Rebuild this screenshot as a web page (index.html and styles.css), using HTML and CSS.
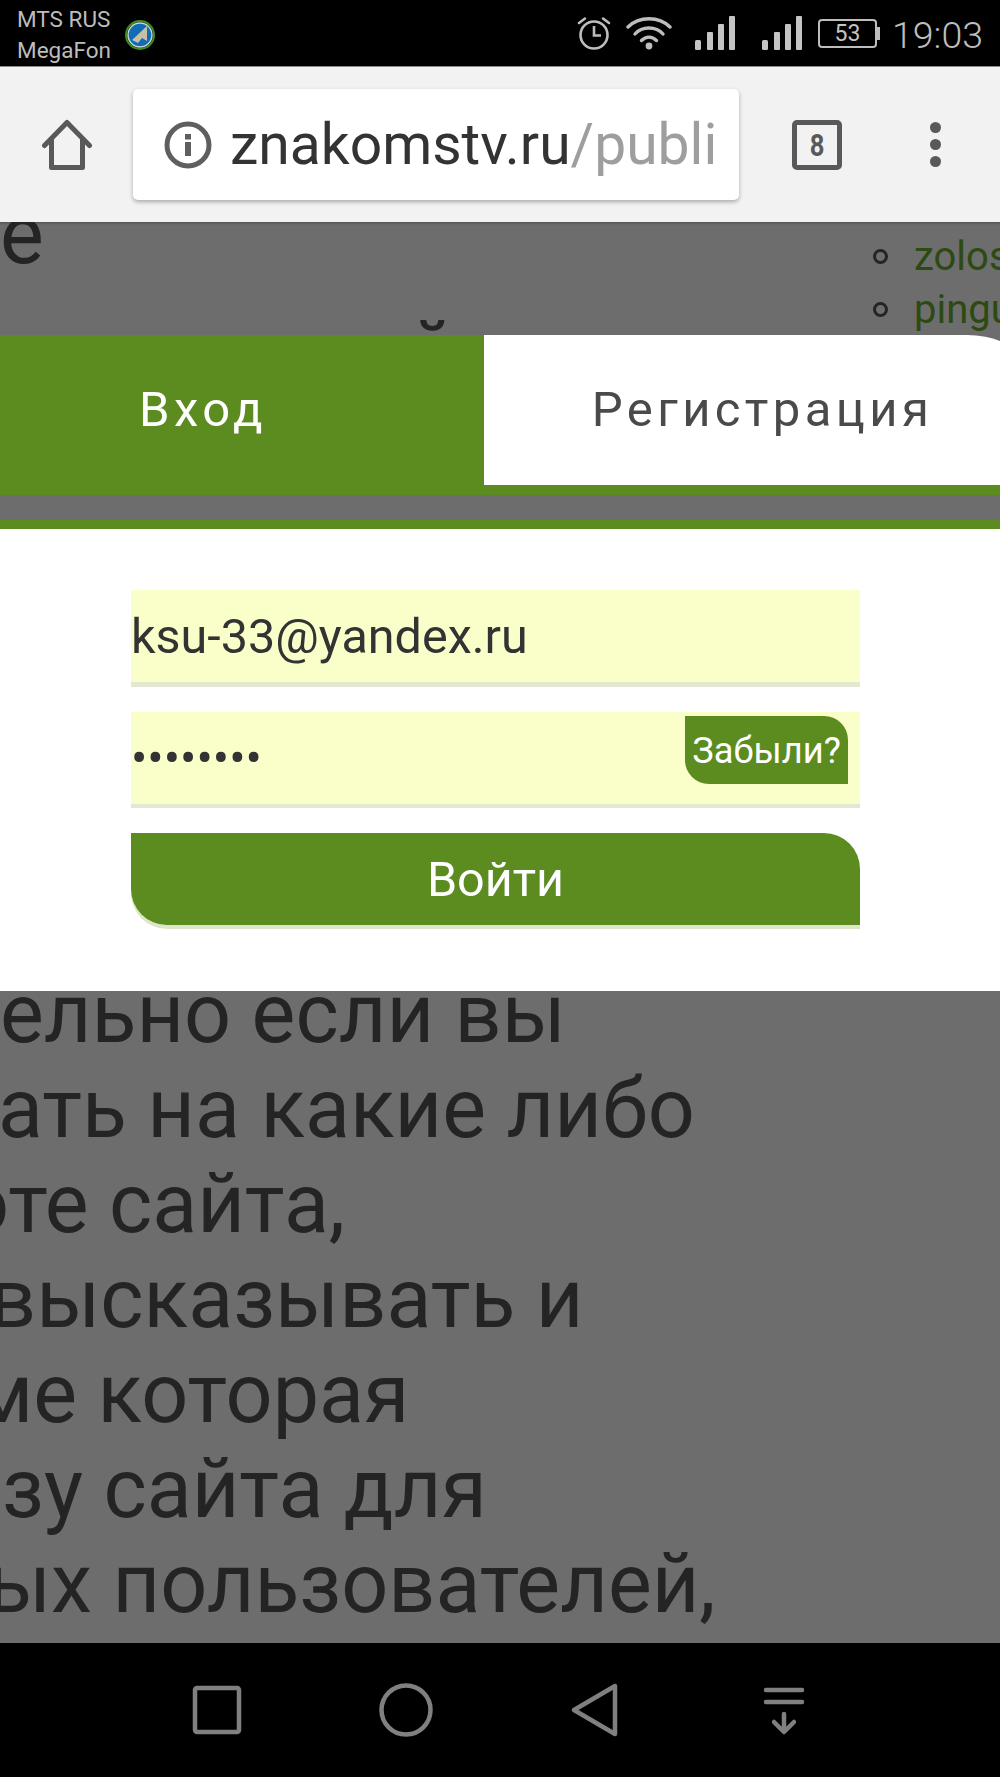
FILE: index.html
```html
<!DOCTYPE html>
<html>

<head>
  <meta charset="utf-8">
  <link rel="stylesheet" href="styles.css">
</head>

<body>
  <div class="phone">
    <!-- Android status bar -->
    <div class="status-bar">
      <div class="carriers">
        <div>MTS RUS</div>
        <div>MegaFon</div>
      </div>
      <svg class="app-badge" width="34" height="34" viewBox="0 0 34 34">
        <circle cx="17" cy="17" r="14" fill="none" stroke="#3f8f1a" stroke-width="2" />
        <circle cx="17" cy="17" r="12" fill="#0f6db5" stroke="#c9d6dc" stroke-width="1.4" />
        <path d="M9 22 L24 8 L24 23 L19 20 L15 25 Z" fill="#c8bfa6" />
      </svg>
      <div class="status-right">
        <svg width="36" height="36" viewBox="0 0 36 36" fill="none" stroke="#bdbdbd" stroke-width="2.6">
          <circle cx="18" cy="20" r="13.5" />
          <path d="M18 11 V20.5 H25" />
          <path d="M3 8 L9 3.5 M33 8 L27 3.5" stroke-linecap="round" />
        </svg>
        <svg class="wifi" width="46" height="34" viewBox="0 0 46 34" fill="none" stroke="#bdbdbd" stroke-width="3.4" stroke-linecap="round">
          <path d="M2 11 C13 0 33 0 44 11" />
          <path d="M9 18 C16 10 30 10 37 18" />
          <path d="M15.5 24.5 C20 20 26 20 30.5 24.5" />
          <circle cx="23" cy="30" r="3.4" fill="#bdbdbd" stroke="none" />
        </svg>
        <svg class="signal" width="40" height="34" viewBox="0 0 40 34" fill="#c4c4c4">
          <rect x="0" y="24" width="6" height="10" rx="1.5" />
          <rect x="12" y="16" width="6" height="18" rx="1" />
          <rect x="23" y="8" width="6" height="26" rx="1" />
          <rect x="34" y="0" width="6" height="34" rx="1" />
        </svg>
        <svg class="signal signal-two" width="40" height="34" viewBox="0 0 40 34" fill="#c4c4c4">
          <rect x="0" y="24" width="6" height="10" rx="1.5" />
          <rect x="12" y="16" width="6" height="18" rx="1" />
          <rect x="23" y="8" width="6" height="26" rx="1" />
          <rect x="34" y="0" width="6" height="34" rx="1" />
        </svg>
        <div class="battery"><span>53</span></div>
        <div class="clock">19:03</div>
      </div>
    </div>

    <!-- Browser toolbar -->
    <div class="toolbar">
      <svg class="home-icon" width="52" height="52" viewBox="0 0 52 52" fill="none" stroke="#595959" stroke-width="5" stroke-linejoin="round" stroke-linecap="round">
        <path d="M3.5 26.5 L26 3.5 L48.5 26.5" />
        <path d="M10.5 20 V48.5 H41.5 V20" />
      </svg>
      <div class="url-box">
        <svg class="info-icon" width="48" height="48" viewBox="0 0 48 48">
          <circle cx="24" cy="24" r="21" fill="none" stroke="#5f5f5f" stroke-width="5" />
          <rect x="21" y="13" width="6" height="5.5" fill="#5f5f5f" />
          <rect x="21" y="21" width="6" height="14" fill="#5f5f5f" />
        </svg>
        <div class="url-text">znakomstv.ru<span class="url-path">/publi</span></div>
      </div>
      <div class="tab-count"><span>8</span></div>
      <div class="menu-dots">
        <span></span>
        <span></span>
        <span></span>
      </div>
    </div>

    <!-- Page under the dim layer -->
    <div class="page">
      <div class="peek">
        <div class="peek-left">
          <div class="peek-big">е</div>
          <div class="peek-line">о с о о ойо</div>
        </div>
        <div class="peek-note">важные мнения</div>
        <ul class="peek-list">
          <li>zoloshka</li>
          <li>pinguin</li>
        </ul>
      </div>

      <div class="login">
        <div class="tabs">
          <div class="tab tab-active">Вход</div>
          <div class="tab tab-idle">Регистрация</div>
        </div>
        <div class="login-form">
          <div class="field">ksu-33@yandex.ru</div>
          <div class="field field-pass">
            <span class="pass-dots">••••••••</span>
            <span class="forgot">Забыли?</span>
          </div>
          <div class="submit">Войти</div>
        </div>
      </div>

      <div class="bg-text">
        <div class="ln ln-1">ельно если вы</div>
        <div class="ln ln-2">ать на какие либо</div>
        <div class="ln ln-3">оте сайта,</div>
        <div class="ln ln-4">высказывать и</div>
        <div class="ln ln-5">ме которая</div>
        <div class="ln ln-6">зу сайта для</div>
        <div class="ln ln-7">ых пользователей,</div>
      </div>
    </div>

    <!-- Android navigation bar -->
    <div class="nav-bar">
      <svg width="60" height="60" viewBox="0 0 60 60" fill="none" stroke="#808080" stroke-width="4.5" stroke-linejoin="round">
        <rect x="8" y="8" width="44" height="44" rx="2" />
      </svg>
      <svg width="60" height="60" viewBox="0 0 60 60" fill="none" stroke="#808080" stroke-width="4.5">
        <circle cx="30" cy="30" r="24.5" />
      </svg>
      <svg width="60" height="60" viewBox="0 0 60 60" fill="none" stroke="#808080" stroke-width="4.5" stroke-linejoin="round">
        <path d="M9 30 L50 6 V54 Z" />
      </svg>
      <svg width="60" height="60" viewBox="0 0 60 60" fill="none" stroke="#808080" stroke-width="4.5" stroke-linecap="round" stroke-linejoin="round">
        <path d="M12 10 H48 M12 22 H48 M30 34 V51 M20 42 L30 52 L40 42" />
      </svg>
    </div>
  </div>
</body>

</html>
```

FILE: styles.css
```css
body {
  margin: 0;
  overflow: hidden;
  background-color: #000;
  font-family: Roboto, "Noto Sans", sans-serif;
}

.phone {
  display: flex;
  flex-direction: column;
  width: 1000px;
  height: 1777px;
  overflow: hidden;
}

/* status bar */
.status-bar {
  display: flex;
  flex: none;
  align-items: center;
  height: 66px;
  padding: 0 17px;
  border-bottom: 1px solid #8a8a8a;
  background-color: #000;
  color: #bdbdbd;
}

.carriers {
  margin-top: 3px;
  font-size: 22.5px;
  line-height: 31px;
  white-space: nowrap;
}

.app-badge {
  margin-top: 4px;
  margin-left: 12px;
}

.status-right {
  display: flex;
  align-items: center;
  margin-left: auto;
}

.wifi {
  margin-left: 14px;
}

.signal {
  margin-left: 23px;
}

.signal-two {
  margin-left: 27px;
}

.battery {
  position: relative;
  box-sizing: border-box;
  width: 59px;
  height: 29px;
  margin-left: 16px;
  border: 2px solid #bdbdbd;
  border-radius: 4px;
  text-align: center;
  font-size: 23px;
  line-height: 25px;
  color: #c4c4c4;
}

.battery::after {
  content: "";
  position: absolute;
  top: 6px;
  right: -5px;
  width: 3px;
  height: 13px;
  background-color: #bdbdbd;
}

.clock {
  margin-top: 3px;
  margin-left: 15px;
  font-size: 37.5px;
  font-weight: 300;
}

/* browser toolbar */
.toolbar {
  display: flex;
  flex: none;
  align-items: center;
  height: 155px;
  background-color: #f2f2f2;
}

.home-icon {
  margin-left: 41px;
}

.url-box {
  display: flex;
  align-items: center;
  box-sizing: border-box;
  width: 606px;
  height: 111px;
  margin-left: 40px;
  padding-left: 31px;
  overflow: hidden;
  background-color: #fff;
  border-radius: 5px;
  box-shadow: 0 2px 4px rgba(0, 0, 0, 0.3);
}

.url-text {
  margin-left: 18px;
  font-size: 57px;
  white-space: nowrap;
  color: #333;
}

.url-path {
  color: #9e9e9e;
}

.tab-count {
  box-sizing: border-box;
  width: 50px;
  height: 50px;
  margin-left: 53px;
  border: 5px solid #595959;
  border-radius: 5px;
  text-align: center;
  font-size: 32px;
  font-weight: 700;
  line-height: 40px;
  color: #595959;
}

/* the count is a condensed digit in the real browser */
.tab-count span {
  display: inline-block;
  transform: scaleX(0.8);
}

.menu-dots {
  display: flex;
  flex-direction: column;
  gap: 6px;
  margin-left: 88px;
}

.menu-dots span {
  width: 11px;
  height: 11px;
  border-radius: 50%;
  background-color: #595959;
}

/* dimmed page */
.page {
  display: flex;
  flex: 1;
  flex-direction: column;
  min-height: 0;
  overflow: hidden;
  background: linear-gradient(#555, #6d6d6d 3px);
  color: #242424;
}

.peek {
  display: flex;
  flex: none;
  height: 113px;
  overflow: hidden;
}

.peek-left {
  flex: none;
  width: 470px;
  white-space: nowrap;
}

.peek-big {
  margin-top: -35px;
  font-size: 82.6px;
  line-height: 95px;
}

.peek-line {
  margin-top: 22px;
  margin-left: 55px;
  font-size: 82.6px;
  line-height: 95px;
  word-spacing: 10px;
}

.peek-note {
  flex: none;
  width: 340px;
  margin-top: -33px;
  font-size: 38px;
  line-height: 40px;
  white-space: nowrap;
}

.peek-list {
  flex: none;
  width: 127px;
  margin: 0;
  padding: 8px 0 0 63px;
  list-style: none;
  font-size: 40px;
  line-height: 53px;
  white-space: nowrap;
  color: #2c4a12;
}

.peek-list li {
  display: flex;
  align-items: center;
  gap: 26px;
}

.peek-list li::before {
  content: "";
  flex: none;
  box-sizing: border-box;
  width: 15px;
  height: 15px;
  border: 3px solid #242424;
  border-radius: 50%;
}

/* login dialog */
.login {
  flex: none;
  position: relative;
  z-index: 1;
  overflow: hidden;
}

.tabs {
  display: flex;
  height: 160px;
  margin-bottom: 25px;
}

.tab {
  flex: none;
  box-sizing: border-box;
  text-align: center;
  font-size: 49px;
  line-height: 150px;
  letter-spacing: 4.4px;
}

.tab-active {
  width: 484px;
  padding-right: 78px;
  background-color: #5c8c20;
  color: #fff;
}

/* runs past the right edge of the screen, as the curve shows */
.tab-idle {
  width: 577px;
  padding-right: 20px;
  background-color: #fff;
  border-bottom: 10px solid #5c8c20;
  border-top-right-radius: 94px;
  color: #4a4a4a;
}

.login-form {
  display: flex;
  flex-direction: column;
  gap: 25px;
  box-sizing: border-box;
  height: 471px;
  padding: 61px 140px 0 131px;
  border-top: 9px solid #5c8c20;
  background-color: #fff;
}

.field {
  display: flex;
  align-items: center;
  justify-content: space-between;
  height: 92px;
  border-bottom: 5px solid #e2e8d2;
  background-color: #fafec8;
  font-size: 48.5px;
  color: #333;
}

.field-pass {
  border-bottom-width: 4px;
}

.forgot {
  align-self: flex-start;
  box-sizing: border-box;
  width: 163px;
  height: 68px;
  margin-top: 4px;
  margin-right: 12px;
  background-color: #5c8c20;
  border-top-right-radius: 24px;
  border-bottom-left-radius: 24px;
  text-align: center;
  font-size: 36.3px;
  line-height: 69px;
  color: #fff;
}

.submit {
  height: 92px;
  border-radius: 0 36px 0 36px;
  background-color: #5c8c20;
  box-shadow: 0 4px 0 #dde6c8;
  text-align: center;
  font-size: 48.5px;
  line-height: 94px;
  color: #fff;
}

/* text behind the dialog */
.bg-text {
  margin-top: -25px;
  font-size: 82.6px;
  line-height: 95px;
  white-space: nowrap;
}

.ln-2 {
  margin-left: -2px;
}

.ln-3 {
  margin-left: -38px;
}

.ln-4 {
  margin-left: -11px;
}

.ln-5 {
  margin-left: -28px;
}

.ln-6 {
  margin-left: 2px;
}

.ln-7 {
  margin-left: -13px;
}

/* navigation bar */
.nav-bar {
  display: flex;
  flex: none;
  align-items: center;
  justify-content: center;
  gap: 129px;
  height: 134px;
  background-color: #000;
}
```
